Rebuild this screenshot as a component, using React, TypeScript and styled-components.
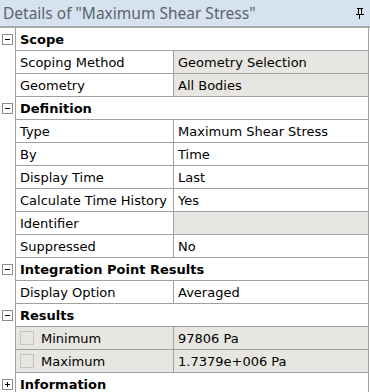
import React from "react";
import styled, { createGlobalStyle } from "styled-components";

const GlobalStyle = createGlobalStyle`
  html, body {
    margin: 0;
    padding: 0;
    background: #ffffff;
  }
`;

const Panel = styled.div`
  width: 370px;
  height: 392px;
  overflow: hidden;
  background: #ffffff;
  font-family: "DejaVu Sans", Tahoma, sans-serif;
  font-size: 13px;
  color: #000000;
`;

const TitleBar = styled.div`
  height: 26px;
  display: flex;
  align-items: center;
  justify-content: space-between;
  padding: 0 6px 0 3px;
  background: #d6e2f0;
  border-bottom: 2px solid #a8a8a8;
`;

const Title = styled.span`
  font-family: "Noto Sans", "Open Sans", sans-serif;
  font-size: 15.5px;
  color: #5a626a;
  white-space: nowrap;
`;

const Table = styled.div`
  width: 368px;
  border-right: 1px solid #a0a0a0;
  display: flex;
  flex-direction: column;
`;

const Row = styled.div`
  display: flex;
  height: 23px;
`;

const Gutter = styled.div`
  width: 16px;
  flex: none;
  display: flex;
  align-items: center;
  justify-content: center;
  border-right: 1px solid #a0a0a0;
  box-sizing: border-box;
`;

const Toggle = styled.div`
  width: 9px;
  height: 9px;
  border: 1px solid #8c8c8c;
  background: #ffffff;
  position: relative;
  margin-right: 1px;

  &::before {
    content: "";
    position: absolute;
    left: 2px;
    top: 4px;
    width: 5px;
    height: 1px;
    background: #000000;
  }
`;

const Plus = styled(Toggle)`
  &::after {
    content: "";
    position: absolute;
    left: 4px;
    top: 2px;
    width: 1px;
    height: 5px;
    background: #000000;
  }
`;

const Header = styled.div`
  flex: 1;
  display: flex;
  align-items: center;
  padding-left: 4px;
  font-weight: bold;
  border-bottom: 1px solid #a0a0a0;
`;

const Name = styled.div<{ $shade?: boolean }>`
  width: 158px;
  flex: none;
  display: flex;
  align-items: center;
  gap: 7px;
  padding-left: 4px;
  box-sizing: border-box;
  white-space: nowrap;
  overflow: hidden;
  background: ${(p) => (p.$shade ? "#e8e6e2" : "#ffffff")};
  border-bottom: 1px solid #a0a0a0;
  border-right: 1px solid #a0a0a0;
`;

const Value = styled.div<{ $shade?: boolean }>`
  flex: 1;
  display: flex;
  align-items: center;
  padding-left: 4px;
  white-space: nowrap;
  background: ${(p) => (p.$shade ? "#e8e6e2" : "#ffffff")};
  border-bottom: 1px solid #a0a0a0;
`;

const Check = styled.span`
  width: 12px;
  height: 12px;
  border: 1px solid #c4c4c4;
  flex: none;
`;

const PinIcon = () => (
  <svg width="8" height="11" viewBox="0 0 8 11">
    <rect x="1" y="0" width="6" height="1" fill="#000" />
    <rect x="2" y="1" width="1" height="5" fill="#000" />
    <rect x="5" y="1" width="1" height="5" fill="#000" />
    <rect x="0" y="6" width="8" height="1" fill="#000" />
    <rect x="3" y="7" width="1" height="4" fill="#000" />
  </svg>
);

type Item =
  | { kind: "header"; label: string; open: boolean }
  | { kind: "prop"; name: string; value: string; shade?: boolean; rowShade?: boolean; check?: boolean };

const items: Item[] = [
  { kind: "header", label: "Scope", open: true },
  { kind: "prop", name: "Scoping Method", value: "Geometry Selection", shade: true },
  { kind: "prop", name: "Geometry", value: "All Bodies", shade: true },
  { kind: "header", label: "Definition", open: true },
  { kind: "prop", name: "Type", value: "Maximum Shear Stress" },
  { kind: "prop", name: "By", value: "Time" },
  { kind: "prop", name: "Display Time", value: "Last" },
  { kind: "prop", name: "Calculate Time History", value: "Yes" },
  { kind: "prop", name: "Identifier", value: "", shade: true },
  { kind: "prop", name: "Suppressed", value: "No" },
  { kind: "header", label: "Integration Point Results", open: true },
  { kind: "prop", name: "Display Option", value: "Averaged" },
  { kind: "header", label: "Results", open: true },
  { kind: "prop", name: "Minimum", value: "97806 Pa", shade: true, rowShade: true, check: true },
  { kind: "prop", name: "Maximum", value: "1.7379e+006 Pa", shade: true, rowShade: true, check: true },
  { kind: "header", label: "Information", open: false },
];

export default function App() {
  return (
    <Panel>
      <GlobalStyle />
      <TitleBar>
        <Title>Details of "Maximum Shear Stress"</Title>
        <PinIcon />
      </TitleBar>
      <Table>
        {items.map((it, i) =>
          it.kind === "header" ? (
            <Row key={i}>
              <Gutter>{it.open ? <Toggle /> : <Plus />}</Gutter>
              <Header>{it.label}</Header>
            </Row>
          ) : (
            <Row key={i}>
              <Gutter />
              <Name $shade={it.rowShade}>
                {it.check && <Check />}
                {it.name}
              </Name>
              <Value $shade={it.shade}>{it.value}</Value>
            </Row>
          )
        )}
      </Table>
    </Panel>
  );
}
